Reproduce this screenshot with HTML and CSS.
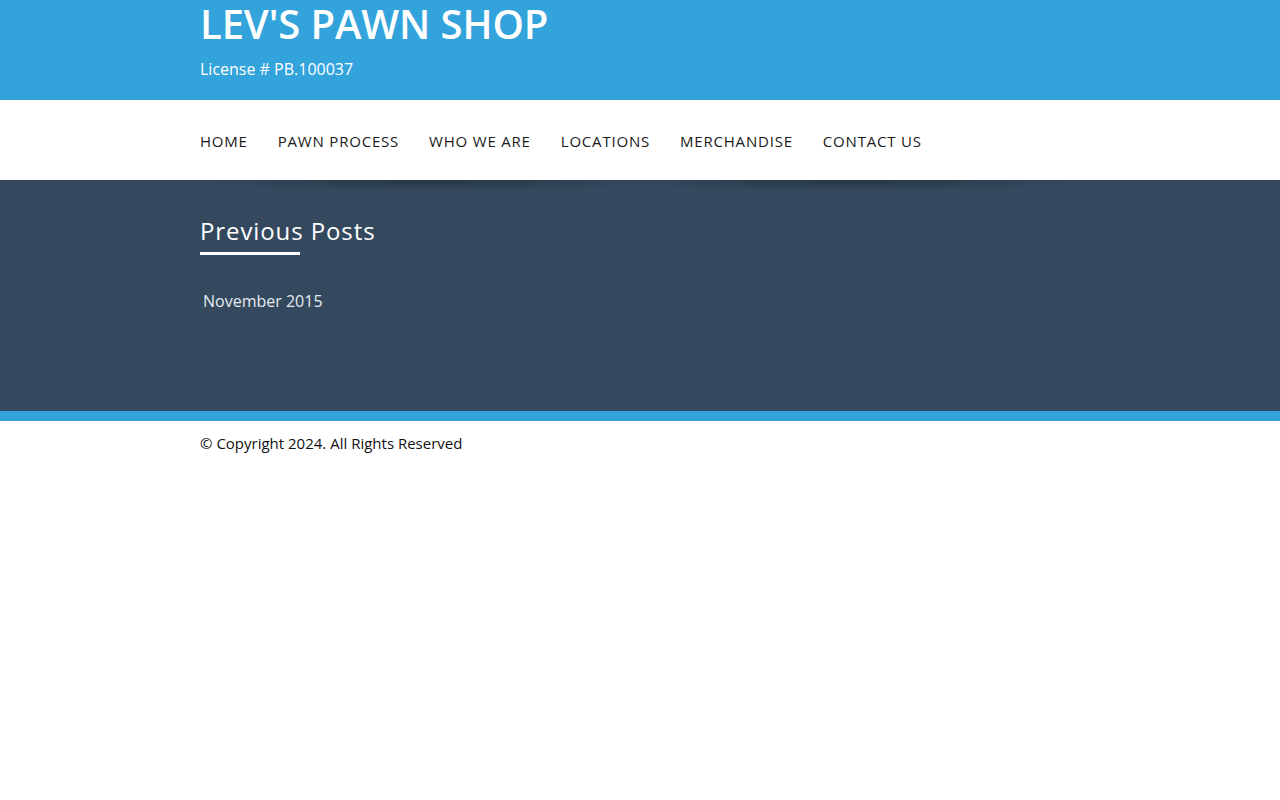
FILE: index.html
```html
<!DOCTYPE html>
<html lang="en">
<head>
    <meta charset="utf-8" />
    <title>Lev's Pawn Shop</title>
    <link rel="stylesheet" href="styles.css">
</head>
<body>
    <header class="masthead">
        <div class="wrap">
            <h1 class="site-title">LEV'S PAWN SHOP</h1>
            <p class="license">License # PB.100037</p>
        </div>
    </header>

    <nav class="main-nav">
        <ul class="wrap">
            <li><a href="#">Home</a></li>
            <li><a href="#">Pawn Process</a></li>
            <li><a href="#">Who We Are</a></li>
            <li><a href="#">Locations</a></li>
            <li><a href="#">Merchandise</a></li>
            <li><a href="#">Contact Us</a></li>
        </ul>
    </nav>

    <section class="content">
        <div class="wrap">
            <h2 class="widget-title">Previous Posts</h2>
            <ul class="archive">
                <li><a href="#">November 2015</a></li>
            </ul>
        </div>
    </section>

    <footer class="site-footer">
        <div class="wrap">
            <p>&copy; Copyright 2024. All Rights Reserved</p>
        </div>
    </footer>
</body>
</html>
```

FILE: styles.css
```css
* {
    margin: 0;
    padding: 0;
    box-sizing: border-box;
}

body {
    font-family: 'Open Sans', 'Liberation Sans', Arial, sans-serif;
    background: #fff;
    color: #111;
}

a {
    color: inherit;
    text-decoration: none;
}

.wrap {
    width: 880px;
    margin: 0 auto;
}

.masthead {
    background: #33a3dc;
    height: 100px;
    color: #fff;
}

.site-title {
    font-size: 40px;
    font-weight: 600;
    line-height: 48px;
    letter-spacing: -0.1px;
}

.license {
    font-size: 16px;
    line-height: 22px;
    margin-top: 10px;
}

.main-nav {
    background: #fff;
    height: 80px;
}

.main-nav ul {
    list-style: none;
    display: flex;
    gap: 30px;
    height: 80px;
    align-items: center;
    padding-top: 2px;
}

.main-nav a {
    font-size: 15px;
    text-transform: uppercase;
    letter-spacing: 0.8px;
    color: #1a1a1a;
}

.content {
    background: #34495e;
    min-height: 231px;
    position: relative;
    padding-top: 34px;
}

/* curled shadow under the nav */
.content::before {
    content: "";
    position: absolute;
    top: 0;
    left: 200px;
    width: 880px;
    height: 16px;
    background:
        radial-gradient(ellipse 230px 12px at 230px 0, rgba(25, 35, 45, 0.5), rgba(25, 35, 45, 0) 100%),
        radial-gradient(ellipse 230px 12px at 650px 0, rgba(25, 35, 45, 0.5), rgba(25, 35, 45, 0) 100%);
}

.widget-title {
    font-size: 24px;
    font-weight: 400;
    color: #fff;
    letter-spacing: 0.9px;
    line-height: 34px;
    display: inline-block;
    padding-bottom: 9px;
}

.widget-title::after {
    content: "";
    display: block;
    width: 100px;
    height: 3px;
    background: #fff;
    margin-top: 4px;
}

.archive {
    list-style: none;
    margin-top: 25px;
    padding-left: 3px;
}

.archive a {
    font-size: 16px;
    color: #e4ecf2;
    line-height: 24px;
}

.site-footer {
    border-top: 10px solid #33a3dc;
    padding-top: 11px;
}

.site-footer p {
    font-size: 15px;
    line-height: 22px;
    color: #111;
}
```
